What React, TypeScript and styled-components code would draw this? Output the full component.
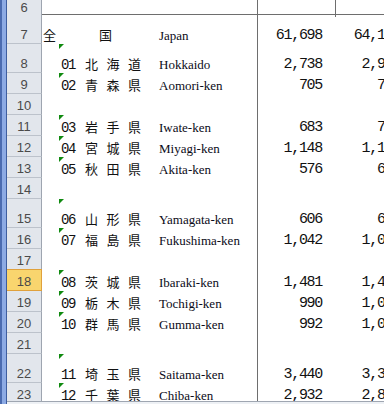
import styled, { createGlobalStyle, css } from "styled-components";

type Line = {
  n: number;
  h?: number;
  code?: string;
  name?: string;
  en?: string;
  a?: string;
  b?: string;
};

const lines: Line[] = [
  { n: 8, h: 29, code: "01", name: "北海道", en: "Hokkaido", a: "2,738", b: "2,912" },
  { n: 9, code: "02", name: "青森県", en: "Aomori-ken", a: "705", b: "742" },
  { n: 10 },
  { n: 11, code: "03", name: "岩手県", en: "Iwate-ken", a: "683", b: "725" },
  { n: 12, code: "04", name: "宮城県", en: "Miyagi-ken", a: "1,148", b: "1,162" },
  { n: 13, code: "05", name: "秋田県", en: "Akita-ken", a: "576", b: "624" },
  { n: 14 },
  { n: 15, h: 29, code: "06", name: "山形県", en: "Yamagata-ken", a: "606", b: "636" },
  { n: 16, code: "07", name: "福島県", en: "Fukushima-ken", a: "1,042", b: "1,061" },
  { n: 17 },
  { n: 18, code: "08", name: "茨城県", en: "Ibaraki-ken", a: "1,481", b: "1,487" },
  { n: 19, code: "09", name: "栃木県", en: "Tochigi-ken", a: "990", b: "1,005" },
  { n: 20, code: "10", name: "群馬県", en: "Gumma-ken", a: "992", b: "1,018" },
  { n: 21 },
  { n: 22, h: 29, code: "11", name: "埼玉県", en: "Saitama-ken", a: "3,440", b: "3,363" },
  { n: 23, code: "12", name: "千葉県", en: "Chiba-ken", a: "2,932", b: "2,880" },
];

const ACTIVE_ROW = 18;

const GlobalStyle = createGlobalStyle`
  *, *::before, *::after { box-sizing: border-box; }
  html, body { margin: 0; padding: 0; background: #fff; }
  body { font-family: "Liberation Sans", Arial, sans-serif; }
`;

const Window = styled.div`
  width: 384px;
  height: 404px;
  display: flex;
  overflow: hidden;
  background: #fff;
`;

const FrameEdge = styled.div`
  flex: 0 0 7px;
  background: linear-gradient(
    to right,
    #4a6bb0 0 2px,
    #8caae4 2px 6px,
    #3d5d9f 6px 7px
  );
`;

const Workspace = styled.div`
  flex: 1;
  min-width: 0;
  display: flex;
  flex-direction: column;
`;

const Sheet = styled.div`
  height: 401px;
  overflow: hidden;
`;

const Row = styled.div<{ $h: number; $rule?: boolean }>`
  display: grid;
  grid-template-columns: 35px 17px 99px 99px 78px 78px;
  height: ${(p) => p.$h}px;
  ${(p) =>
    p.$rule &&
    css`
      border-bottom: 1px solid #6e6e6e;
    `}
`;

const RowHead = styled.div<{ $active?: boolean; $plain?: boolean }>`
  position: relative;
  display: flex;
  align-items: flex-end;
  justify-content: center;
  padding-bottom: ${(p) => (p.$plain ? 1 : 0)}px;
  background: #e2e6ec;
  border-right: 1px solid #9ea5b0;
  border-bottom: ${(p) => (p.$plain ? "none" : "1px solid #bcc2cb")};
  font: 13px/16px "Liberation Sans", Arial, sans-serif;
  color: #4a4a4a;
  ${(p) =>
    p.$active &&
    css`
      background: #f9d56e;
      border-right-color: #e0a13c;
      border-bottom-color: #e0a13c;
      box-shadow: 0 -1px 0 #e0a13c;
    `}
`;

const Cell = styled.div<{ $edge?: boolean; $span?: number }>`
  display: flex;
  align-items: flex-end;
  min-width: 0;
  white-space: nowrap;
  ${(p) => p.$span && css`grid-column: span ${p.$span};`}
  ${(p) =>
    p.$edge &&
    css`
      border-left: 1px solid #6e6e6e;
    `}
`;

const NameCell = styled(Cell)<{ $flag?: boolean }>`
  position: relative;
  padding-left: 2px;

  ${(p) =>
    p.$flag &&
    css`
      &::before {
        content: "";
        position: absolute;
        top: 0;
        left: 0;
        border-top: 5px solid #108a10;
        border-right: 5px solid transparent;
      }
    `}
`;

const Title = styled.div`
  display: flex;
  gap: 43px;
  padding-left: 1px;
`;

const Code = styled.span`
  flex: 0 0 24px;
  font: 14px/16px "Liberation Mono", monospace;
  letter-spacing: -1.4px;
  color: #111;
`;

const Kanji = styled.div`
  display: flex;
  gap: 8.5px;
`;

const Glyph = styled.span`
  width: 13px;
  font: 13px/16px "Noto Sans CJK JP", sans-serif;
  color: #111;
  padding-bottom: 1px;
`;

const Romaji = styled.div`
  padding-left: 1px;
  font: 13px/16px "Liberation Serif", "Times New Roman", serif;
  color: #0b0b18;
`;

const Amount = styled(Cell)`
  justify-content: flex-end;
  padding-right: 13px;
  font: 15px/16px "Liberation Mono", monospace;
  letter-spacing: -1.3px;
  color: #111;
`;

const BottomBar = styled.div`
  height: 3px;
  background: #eef1f5;
  border-top: 1px solid #9fa6b1;
`;

const Spread = ({ text }: { text: string }) => (
  <Kanji>
    {Array.from(text).map((ch, i) => (
      <Glyph key={i}>{ch}</Glyph>
    ))}
  </Kanji>
);

export default function App() {
  return (
    <>
      <GlobalStyle />
      <Window>
        <FrameEdge />
        <Workspace>
          <Sheet>
            <Row $h={15} $rule>
              <RowHead $plain>6</RowHead>
              <Cell />
              <Cell />
              <Cell />
              <Cell $edge />
              <Cell $edge />
            </Row>

            <Row $h={29}>
              <RowHead>7</RowHead>
              <Cell $span={2}>
                <Title>
                  <Glyph>全</Glyph>
                  <Glyph>国</Glyph>
                </Title>
              </Cell>
              <Cell>
                <Romaji>Japan</Romaji>
              </Cell>
              <Amount $edge>61,698</Amount>
              <Amount>64,130</Amount>
            </Row>

            {lines.map((l) => (
              <Row key={l.n} $h={l.h ?? 21}>
                <RowHead $active={l.n === ACTIVE_ROW}>{l.n}</RowHead>
                <Cell />
                <NameCell $flag={!!l.code}>
                  {l.code && (
                    <>
                      <Code>{l.code}</Code>
                      <Spread text={l.name ?? ""} />
                    </>
                  )}
                </NameCell>
                <Cell>{l.en && <Romaji>{l.en}</Romaji>}</Cell>
                <Amount $edge>{l.a}</Amount>
                <Amount>{l.b}</Amount>
              </Row>
            ))}
          </Sheet>
          <BottomBar />
        </Workspace>
      </Window>
    </>
  );
}
